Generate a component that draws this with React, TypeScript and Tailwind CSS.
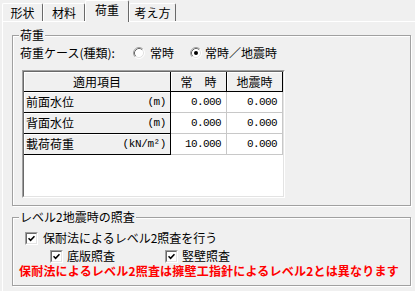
import React from 'react';

const ui = { fontFamily: '"Noto Sans CJK JP", "Noto Sans", sans-serif' };
const mono = { fontFamily: '"Liberation Mono", "Noto Sans CJK JP", monospace' };

// Windows-style sunken radio button
const Radio = ({ checked }: { checked?: boolean }) => (
  <svg width="12" height="12" viewBox="0 0 12 12" className="shrink-0">
    <circle cx="6" cy="6" r="5" fill="#fff" />
    <path d="M2.11 9.89 A5.5 5.5 0 0 1 9.89 2.11" fill="none" stroke="#a0a0a0" />
    <path d="M9.89 2.11 A5.5 5.5 0 0 1 2.11 9.89" fill="none" stroke="#fff" />
    <path d="M2.82 9.18 A4.5 4.5 0 0 1 9.18 2.82" fill="none" stroke="#696969" />
    <path d="M9.18 2.82 A4.5 4.5 0 0 1 2.82 9.18" fill="none" stroke="#e3e3e3" />
    {checked && <circle cx="6" cy="6" r="2" fill="#000" />}
  </svg>
);

// Windows-style sunken checkbox
const Check = () => (
  <div className="w-[13px] h-[13px] shrink-0 border border-t-[#a0a0a0] border-l-[#a0a0a0] border-b-white border-r-white">
    <div className="w-full h-full border border-t-[#696969] border-l-[#696969] border-b-[#e3e3e3] border-r-[#e3e3e3] bg-white flex items-center justify-center">
      <svg width="7" height="7" viewBox="0 0 7 7">
        <path d="M0.5 3.2 L2.6 5.3 L6.5 1.2" fill="none" stroke="#000" strokeWidth="1.6" />
      </svg>
    </div>
  </div>
);

const Tab = ({ label, width, active }: { label: string; width: string; active?: boolean }) => (
  <div
    className={`${width} flex items-center justify-center rounded-t-[2px] border-l border-t border-l-white border-t-white border-r border-r-[#696969] bg-[#f0f0f0] ${
      active ? 'h-[22px] -mb-[1px] pb-[3px] relative z-10' : 'h-[18px] pt-[1px]'
    }`}
  >
    <span className="text-[12px] leading-[14px] text-black">{label}</span>
  </div>
);

const GroupBox = ({ title, className, children }: { title: string; className: string; children: React.ReactNode }) => (
  <div className={`relative ml-[9px] w-[399px] border border-[#a0a0a0] shadow-[inset_1px_1px_0_#fff,1px_1px_0_#fff] ${className}`}>
    <span className="absolute -top-[8px] left-[6px] px-[1px] bg-[#f0f0f0] text-[12px] leading-[14px]">{title}</span>
    {children}
  </div>
);

const rows = [
  { name: '前面水位', unit: '(m)', v1: '0.000', v2: '0.000' },
  { name: '背面水位', unit: '(m)', v1: '0.000', v2: '0.000' },
  { name: '載荷荷重', unit: '(kN/m²)', v1: '10.000', v2: '0.000' },
];

export default function App() {
  return (
    <div className="w-[415px] h-[291px] overflow-hidden bg-[#f0f0f0] text-black flex flex-col" style={ui}>
      {/* Tabs */}
      <div className="h-[21px] flex items-end pl-[2px]">
        <Tab label="形状" width="w-[41px]" />
        <Tab label="材料" width="w-[42px]" />
        <Tab label="荷重" width="w-[44px]" active />
        <Tab label="考え方" width="w-[47px]" />
      </div>

      {/* Tab page */}
      <div className="flex-1 ml-[2px] border-l border-t border-white">
        <GroupBox title="荷重" className="mt-[13px] h-[171px]">
          <div className="pl-[7px] pt-[10px]">
            <div className="flex items-center h-[14px] text-[12px] leading-[14px]">
              <span className="w-[113px]">荷重ケース(種類):</span>
              <Radio />
              <span className="w-[45px] pl-[5px]">常時</span>
              <Radio checked />
              <span className="pl-[3px]">常時／地震時</span>
            </div>

            {/* Grid */}
            <div className="mt-[10px] ml-[2px] w-[263px] h-[128px] border border-t-[#a0a0a0] border-l-[#a0a0a0] border-b-white border-r-white">
              <div className="w-full h-full bg-white border border-t-[#696969] border-l-[#696969] border-b-[#e3e3e3] border-r-[#e3e3e3]">
                <div className="grid grid-cols-[147px_56px_56px] text-[12px] leading-[14px]">
                  <div className="h-[20px] flex items-center justify-center bg-[#f0f0f0] border-r border-b border-black shadow-[inset_1px_1px_0_#fff]">適用項目</div>
                  <div className="h-[20px] flex items-center justify-center bg-[#f0f0f0] border-r border-b border-black shadow-[inset_1px_1px_0_#fff]">常　時</div>
                  <div className="h-[20px] flex items-center justify-center bg-[#f0f0f0] border-r border-b border-black shadow-[inset_1px_1px_0_#fff]">地震時</div>
                  {rows.map((r) => (
                    <React.Fragment key={r.name}>
                      <div className="h-[21px] flex items-center justify-between pl-[2px] pr-[4px] bg-[#f0f0f0] border-r border-b border-black shadow-[inset_1px_1px_0_#fff]">
                        <span>{r.name}</span>
                        <span className="text-[11px] tracking-[-0.4px]" style={mono}>{r.unit}</span>
                      </div>
                      <div className="h-[21px] flex items-center justify-end pr-[5px] border-r border-b border-[#c8c8c8] text-[11px] tracking-[-0.6px]" style={mono}>{r.v1}</div>
                      <div className="h-[21px] flex items-center justify-end pr-[5px] border-r border-b border-[#c8c8c8] text-[11px] tracking-[-0.6px]" style={mono}>{r.v2}</div>
                    </React.Fragment>
                  ))}
                </div>
              </div>
            </div>
          </div>
        </GroupBox>

        <GroupBox title="レベル2地震時の照査" className="mt-[11px] h-[69px]">
          <div className="pt-[13px] text-[12px] leading-[14px]">
            <div className="flex items-center h-[14px] ml-[12px] gap-[5px]">
              <Check />
              <span>保耐法によるレベル2照査を行う</span>
            </div>
            <div className="flex items-center h-[14px] mt-[4px] ml-[37px]">
              <div className="w-[115px] flex items-center gap-[4px]">
                <Check />
                <span>底版照査</span>
              </div>
              <div className="flex items-center gap-[4px]">
                <Check />
                <span>竪壁照査</span>
              </div>
            </div>
            <div className="mt-[1px] ml-[6px] font-bold text-[#ff0000] tracking-[0.2px]">
              保耐法によるレベル2照査は擁壁工指針によるレベル2とは異なります
            </div>
          </div>
        </GroupBox>
      </div>
    </div>
  );
}
